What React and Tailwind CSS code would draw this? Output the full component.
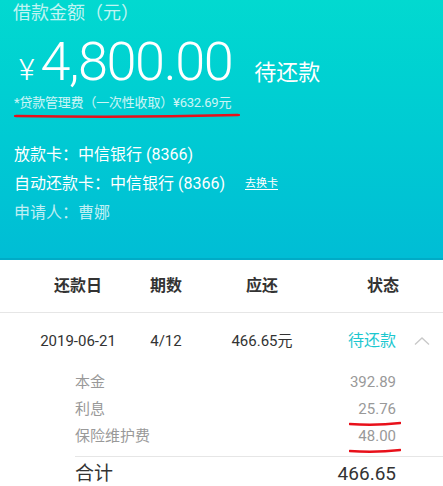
import React from "react";

const font = { fontFamily: '"Roboto", "Noto Sans CJK SC", sans-serif' };

const details = [
  { label: "本金", value: "392.89" },
  { label: "利息", value: "25.76", mark: true },
  { label: "保险维护费", value: "48.00", mark: true },
];

function RedMark({ className }) {
  return (
    <svg className={className} viewBox="0 0 100 6" preserveAspectRatio="none">
      <path d="M1 3 Q 50 5 99 2" stroke="#e8101a" strokeWidth="2.4" fill="none" strokeLinecap="round" />
    </svg>
  );
}

export default function App() {
  return (
    <div className="w-[443px] h-[486px] overflow-hidden bg-white" style={font}>
      {/* header */}
      <div className="relative h-[260px] bg-gradient-to-b from-[#02d9d0] to-[#00bdd5] border-b-2 border-[#00abc6] text-white">
        <div className="pl-[13px] text-[18px] leading-[26px] text-white/75">借款金额（元）</div>
        <div className="flex items-baseline pl-[19px] mt-[4px] h-[64px]">
          <span className="text-[30px] font-light mr-[6px]">¥</span>
          <span className="text-[54px] font-light leading-[64px] tracking-[-1.4px]">4,800.00</span>
          <span className="text-[22px] ml-[22px]">待还款</span>
        </div>
        <div className="pl-[14px] text-[13px] leading-[18px] tracking-[-0.2px] text-white/80">*贷款管理费（一次性收取）¥632.69元</div>
        <RedMark className="absolute left-[14px] top-[113px] w-[226px] h-[6px]" />
        <div className="mt-[28px] pl-[14px] text-[16px] leading-[29px]">
          <div>放款卡：中信银行 (8366)</div>
          <div className="flex items-center">
            <span>自动还款卡：中信银行 (8366)</span>
            <span className="ml-[20px] text-[11px] underline underline-offset-2">去换卡</span>
          </div>
          <div className="text-white/75">申请人：曹娜</div>
        </div>
      </div>

      {/* table header */}
      <div className="flex items-center h-[53px] border-b border-[#e6e6e6] text-[16px] font-bold text-[#333]">
        <div className="ml-[20px] w-[116px] text-center">还款日</div>
        <div className="w-[60px] text-center">期数</div>
        <div className="w-[132px] text-center">应还</div>
        <div className="w-[110px] text-center">状态</div>
      </div>

      {/* row */}
      <div className="flex items-center h-[56px] text-[15px] text-[#333]">
        <div className="ml-[20px] w-[116px] text-center">2019-06-21</div>
        <div className="w-[60px] text-center">4/12</div>
        <div className="w-[132px] text-center">466.65元</div>
        <div className="w-[88px] text-center text-[16px] text-[#1cc7cf]">待还款</div>
        <svg className="ml-[-2px]" width="16" height="10" viewBox="0 0 16 10">
          <path d="M1 8.5 L8 2 L15 8.5" stroke="#c8c8c8" strokeWidth="1.3" fill="none" />
        </svg>
      </div>

      {/* details */}
      <div className="ml-[75px]">
        <div className="pr-[47px] text-[15px] text-[#999]">
          {details.map((d) => (
            <div key={d.label} className="relative flex justify-between h-[27px] items-center">
              <span>{d.label}</span>
              <span>{d.value}</span>
              {d.mark && <RedMark className="absolute right-[-5px] bottom-[-4px] w-[52px] h-[6px]" />}
            </div>
          ))}
        </div>
        <div className="mt-[6px] border-t border-[#e6e6e6] pr-[47px] flex justify-between items-center h-[36px] text-[19px] text-[#333]">
          <span>合计</span>
          <span>466.65</span>
        </div>
      </div>
    </div>
  );
}
